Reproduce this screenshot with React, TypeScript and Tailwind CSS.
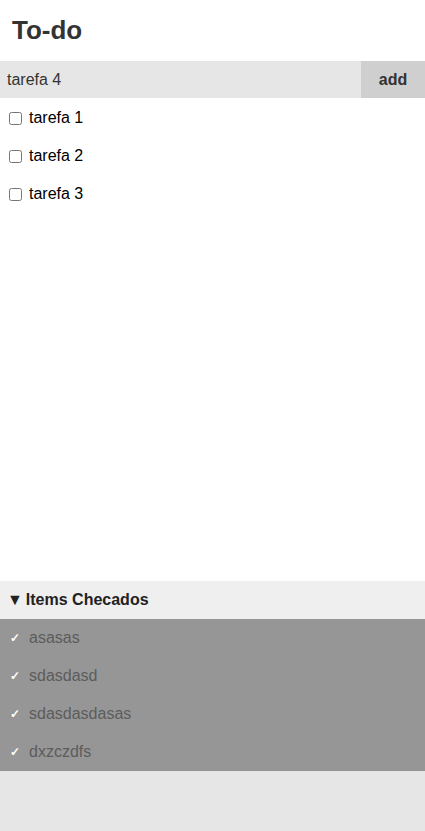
import { useState } from "react";

const pending = ["tarefa 1", "tarefa 2", "tarefa 3"];
const done = ["asasas", "sdasdasd", "sdasdasdasas", "dxzczdfs"];

export default function App() {
  const [text, setText] = useState("tarefa 4");

  return (
    <div
      className="flex h-[831px] flex-col bg-white text-[#333]"
      style={{ fontFamily: '"Liberation Sans", Arial, sans-serif' }}
    >
      <h1 className="flex h-[61px] items-center px-3 text-[26px] font-bold">To-do</h1>

      {/* input + add */}
      <div className="flex h-[37px]">
        <input
          value={text}
          onChange={(e) => setText(e.target.value)}
          className="min-w-0 flex-1 bg-[#e6e6e6] px-[7px] text-base text-[#333] outline-none"
        />
        <button className="w-16 bg-[#cfcfcf] text-base font-bold text-[#333]">add</button>
      </div>

      <ul className="flex-1 pt-px">
        {pending.map((t) => (
          <li key={t} className="flex h-[38px] items-center gap-[7px] pl-[9px] text-base text-black">
            <input type="checkbox" className="m-0 h-[13px] w-[13px]" />
            <span>{t}</span>
          </li>
        ))}
      </ul>

      {/* checked items */}
      <div className="flex h-[38px] items-center bg-[#efefef] pl-[7px] text-base font-bold text-[#222]">
        <span className="mr-[3px] text-[16px] leading-none">▼</span>Items Checados
      </div>
      <ul className="bg-[#969696]">
        {done.map((t) => (
          <li key={t} className="flex h-[38px] items-center text-base text-[#5c5c5c]">
            <span className="w-[29px] pl-[10px] text-[12px] font-bold text-white">✓</span>
            <span>{t}</span>
          </li>
        ))}
      </ul>
      <div className="h-[60px] bg-[#e6e6e6]" />
    </div>
  );
}
